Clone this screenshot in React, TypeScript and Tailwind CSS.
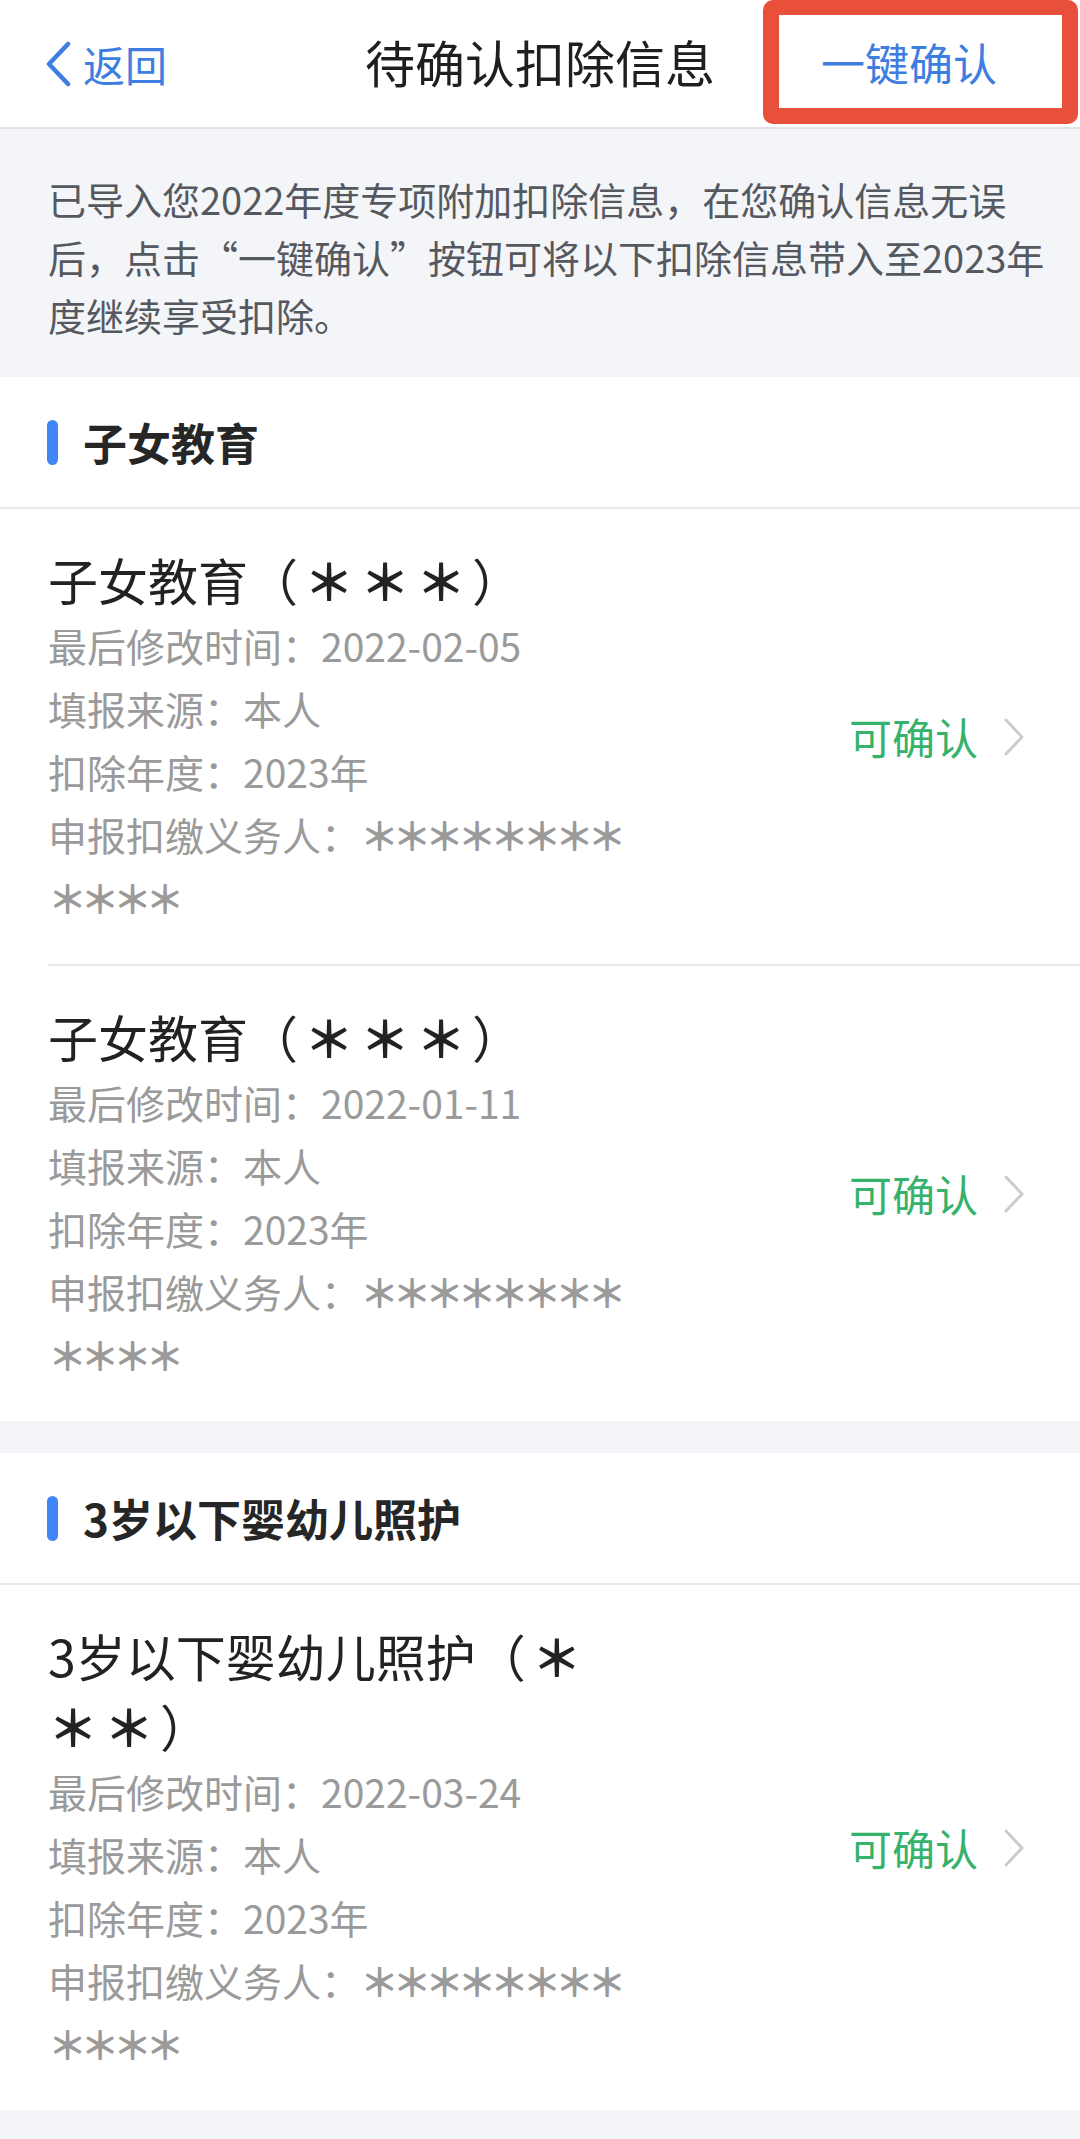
import React from 'react';

type Entry = {
  title: React.ReactNode;
  modified: string;
};

const sections: { name: string; entries: Entry[] }[] = [
  {
    name: '子女教育',
    entries: [
      { title: <>子女教育<span className="tracking-[6px]">（<b className="font-semibold">＊＊＊</b>）</span></>, modified: '2022-02-05' },
      { title: <>子女教育<span className="tracking-[6px]">（<b className="font-semibold">＊＊＊</b>）</span></>, modified: '2022-01-11' },
    ],
  },
  {
    name: '3岁以下婴幼儿照护',
    entries: [
      {
        title: (
          <>
            3岁以下婴幼儿照护<span className="tracking-[6px]">（<b className="font-semibold">＊</b></span>
            <br />
            <span className="tracking-[6px]"><b className="font-semibold">＊＊</b>）</span>
          </>
        ),
        modified: '2022-03-24',
      },
    ],
  },
];

const Stars = ({ n }: { n: number }) => (
  <span className="font-bold tracking-[-6.5px]">{'＊'.repeat(n)}</span>
);

const Chevron = () => (
  <svg width="22" height="40" viewBox="0 0 22 40" fill="none">
    <path d="M3 3 L19 20 L3 37" stroke="#cccccc" strokeWidth="3" strokeLinecap="round" strokeLinejoin="round" />
  </svg>
);

const Item = ({ entry, last }: { entry: Entry; last: boolean }) => (
  <div className={`flex items-center pt-[35px] pr-[55px] ${last ? 'pb-[35px]' : 'pb-[35px] border-b-2 border-[#e9e9e9]'}`}>
    <div className="flex-1">
      <div className="text-[50px] leading-[70px] text-[#222222]">{entry.title}</div>
      <div className="text-[39px] leading-[63px] text-[#9a9a9a]">
        <div>最后修改时间：{entry.modified}</div>
        <div>填报来源：本人</div>
        <div>扣除年度：2023年</div>
        <div>
          申报扣缴义务人：<Stars n={8} />
        </div>
        <div>
          <Stars n={4} />
        </div>
      </div>
    </div>
    <div className="flex items-center gap-[25px]">
      <span className="text-[43px] text-[#36b26c]">可确认</span>
      <Chevron />
    </div>
  </div>
);

export default function App() {
  return (
    <div className="min-h-[2139px] w-[1080px] bg-[#f3f5f8] font-['Noto_Sans_CJK_SC','Noto_Sans',sans-serif]">
      {/* top bar */}
      <header className="grid h-[129px] grid-cols-[1fr_auto_1fr] border-b-2 border-[#e1e3e7] bg-white">
        <div className="flex items-center pl-[45px]">
          <svg width="26" height="46" viewBox="0 0 26 46" fill="none">
            <path d="M23 3 L4 23 L23 43" stroke="#3e7ee0" strokeWidth="4.5" strokeLinecap="round" strokeLinejoin="round" />
          </svg>
          <span className="ml-[12px] text-[42px] text-[#3e7ee0]">返回</span>
        </div>
        <div className="flex items-center pb-[4px] text-[50px] text-[#1f1f1f]">待确认扣除信息</div>
        <div className="flex items-start justify-end pr-[2px]">
          <div className="flex h-[124px] w-[315px] items-center rounded-[10px] border-[16px] border-t-[15px] border-[#e9503c] pl-[42px]">
            <span className="text-[44px] text-[#3e7ee0]">一键确认</span>
          </div>
        </div>
      </header>

      {/* intro */}
      <div className="px-[48px] pt-[41px] pb-[33px] text-[38px] leading-[58px] text-[#55595f] whitespace-nowrap">
        已导入您2022年度专项附加扣除信息，在您确认信息无误
        <br />
        后，点击“一键确认”按钮可将以下扣除信息带入至2023年
        <br />
        度继续享受扣除。
      </div>

      <div className="flex flex-col gap-[32px]">
        {sections.map((s) => (
          <section key={s.name} className="bg-white">
            <div className="flex h-[132px] items-center border-b-2 border-[#e9e9e9] pl-[47px]">
              <span className="h-[45px] w-[11px] rounded-full bg-[#4286f5]" />
              <span className="ml-[25px] text-[44px] font-bold text-[#262626]">{s.name}</span>
            </div>
            <div className="pl-[48px]">
              {s.entries.map((e, i) => (
                <Item key={i} entry={e} last={i === s.entries.length - 1} />
              ))}
            </div>
          </section>
        ))}
      </div>
    </div>
  );
}
